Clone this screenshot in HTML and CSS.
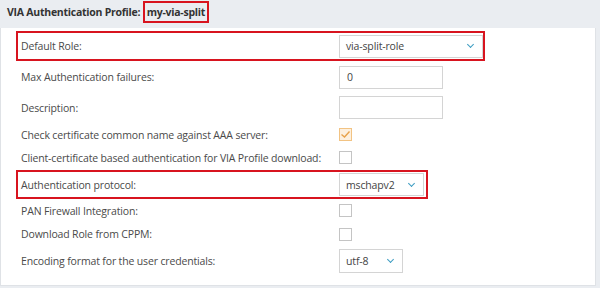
FILE: index.html
```html
<!DOCTYPE html>
<html lang="en">
<head>
    <meta charset="UTF-8">
    <title>VIA Authentication Profile</title>
    <link rel="stylesheet" href="styles.css">
</head>
<body>
    <div class="titleBar">VIA Authentication Profile: <span class="profileName">my-via-split</span></div>
    <div class="panel">
        <div class="row marked r1">
            <span class="label">Default Role:</span>
            <div class="select wide">via-split-role <span class="chev"></span></div>
        </div>
        <div class="row r2">
            <span class="label">Max Authentication failures:</span>
            <div class="textbox">0</div>
        </div>
        <div class="row r3">
            <span class="label">Description:</span>
            <div class="textbox"></div>
        </div>
        <div class="row r4">
            <span class="label">Check certificate common name against AAA server:</span>
            <span class="check checked">
                <svg width="11" height="9" viewBox="0 0 11 9"><path d="M1.5 4.5 L4.5 7 L9.5 1.5" fill="none" stroke="#e8a24a" stroke-width="1.4"/></svg>
            </span>
        </div>
        <div class="row r5">
            <span class="label">Client-certificate based authentication for VIA Profile download:</span>
            <span class="check"></span>
        </div>
        <div class="row marked r6">
            <span class="label">Authentication protocol:</span>
            <div class="select mid">mschapv2 <span class="chev"></span></div>
        </div>
        <div class="row r7">
            <span class="label">PAN Firewall Integration:</span>
            <span class="check"></span>
        </div>
        <div class="row r8">
            <span class="label">Download Role from CPPM:</span>
            <span class="check"></span>
        </div>
        <div class="row r9">
            <span class="label">Encoding format for the user credentials:</span>
            <div class="select small">utf-8 <span class="chev"></span></div>
        </div>
    </div>
</body>
</html>
```

FILE: styles.css
```css
body {
    margin: 0;
    background: #eaedf1;
    font-family: 'Open Sans', Arial, sans-serif;
    font-size: 10.5px;
    letter-spacing: -0.15px;
    color: #4a4a4a;
    width: 600px;
    height: 288px;
    overflow: hidden;
}
.titleBar {
    height: 28px;
    box-sizing: border-box;
    padding: 3px 0 0 7px;
    font-weight: 700;
    font-size: 10.5px;
    letter-spacing: -0.25px;
    line-height: 18px;
    color: #333;
}
.profileName {
    display: inline-block;
    border: 2px solid #d8141f;
    padding: 0 2px;
    line-height: 18px;
    margin-top: -2px;
    vertical-align: top;
}
.panel {
    width: 594px;
    height: 254px;
    background: #fff;
    border: 1px solid #dfe2e6;
    border-top: none;
    display: flex;
    flex-direction: column;
    align-items: flex-start;
    padding-top: 3px;
}
.row {
    display: flex;
    align-items: center;
    margin-left: 15px;
    border: 2px solid transparent;
    padding-left: 3px;
    box-sizing: border-box;
}
.row.marked {
    border-color: #d8141f;
}
.label {
    width: 318px;
    flex: none;
    white-space: nowrap;
}
.r1 { height: 30px; padding-right: 0; }
.r2 { height: 32px; }
.r3 { height: 29px; }
.r4 { height: 25px; }
.r5 { height: 21px; }
.r6 { height: 29px; margin-top: 2px; padding-right: 2px; }
.r7 { height: 23px; }
.r8 { height: 24px; }
.r9 { height: 30px; }
.select {
    height: 23px;
    border: 1px solid #d4d4d4;
    box-sizing: border-box;
    display: flex;
    align-items: center;
    justify-content: space-between;
    padding: 0 9px 0 6px;
    color: #444;
}
.select.wide { width: 144px; }
.select.mid { width: 85px; }
.select.small { width: 64px; height: 24px; }
.chev {
    width: 4px;
    height: 4px;
    border-right: 1.5px solid #3d9cc2;
    border-bottom: 1.5px solid #3d9cc2;
    transform: rotate(45deg);
    margin-top: -3px;
}
.textbox {
    width: 104px;
    height: 23px;
    border: 1px solid #d4d4d4;
    box-sizing: border-box;
    padding-left: 7px;
    display: flex;
    align-items: center;
    color: #444;
}
.check {
    width: 13px;
    height: 13px;
    border: 1px solid #c4c4c4;
    box-sizing: border-box;
    background: #fff;
    display: flex;
    align-items: center;
    justify-content: center;
}
.check.checked {
    background: #fdf0de;
    border-color: #f2c383;
}
```
